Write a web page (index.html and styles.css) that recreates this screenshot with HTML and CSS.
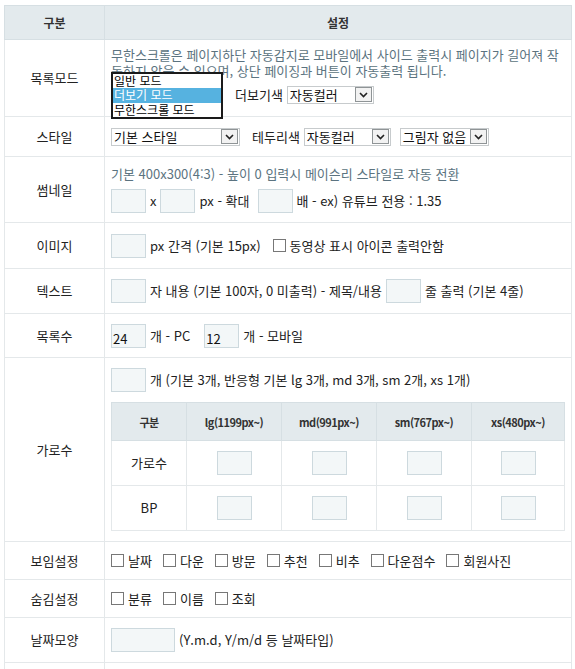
FILE: index.html
```html
<!DOCTYPE html>
<html lang="ko">
<head>
  <meta charset="UTF-8" />
  <title>목록 설정</title>
  <link rel="stylesheet" href="styles.css">
</head>
<body>
  <table class="frm">
    <colgroup>
      <col class="col-th">
      <col>
    </colgroup>
    <thead>
      <tr>
        <th>구분</th>
        <th>설정</th>
      </tr>
    </thead>
    <tbody>
      <tr class="r-mode">
        <td class="lbl">목록모드</td>
        <td>
          <div class="mode-wrap">
            <p class="desc">무한스크롤은 페이지하단 자동감지로 모바일에서 사이드 출력시 페이지가 길어져 작동하지 않을 수 있으며, 상단 페이징과 버튼이 자동출력 됩니다.</p>
            <div class="line">
              <span class="sel w-mode"><span class="sel-txt">더보기 모드</span><span class="sel-btn"><svg width="9" height="6" viewBox="0 0 9 6"><path d="M1 1l3.5 3.5L8 1" fill="none" stroke="#222" stroke-width="1.6"/></svg></span></span>
              <span class="gap">더보기색</span>
              <span class="sel w-color"><span class="sel-txt">자동컬러</span><span class="sel-btn"><svg width="9" height="6" viewBox="0 0 9 6"><path d="M1 1l3.5 3.5L8 1" fill="none" stroke="#222" stroke-width="1.6"/></svg></span></span>
            </div>
            <ul class="dropdown">
              <li>일반 모드</li>
              <li class="on">더보기 모드</li>
              <li>무한스크롤 모드</li>
            </ul>
          </div>
        </td>
      </tr>
      <tr class="r-style">
        <td class="lbl">스타일</td>
        <td>
          <div class="line">
            <span class="sel w-style"><span class="sel-txt">기본 스타일</span><span class="sel-btn"><svg width="9" height="6" viewBox="0 0 9 6"><path d="M1 1l3.5 3.5L8 1" fill="none" stroke="#222" stroke-width="1.6"/></svg></span></span>
            <span class="gap">테두리색</span>
            <span class="sel w-color"><span class="sel-txt">자동컬러</span><span class="sel-btn"><svg width="9" height="6" viewBox="0 0 9 6"><path d="M1 1l3.5 3.5L8 1" fill="none" stroke="#222" stroke-width="1.6"/></svg></span></span>
            <span class="sel w-shadow"><span class="sel-txt">그림자 없음</span><span class="sel-btn"><svg width="9" height="6" viewBox="0 0 9 6"><path d="M1 1l3.5 3.5L8 1" fill="none" stroke="#222" stroke-width="1.6"/></svg></span></span>
          </div>
        </td>
      </tr>
      <tr class="r-thumb">
        <td class="lbl">썸네일</td>
        <td>
          <p class="desc">기본 400x300(4:3) - 높이 0 입력시 메이슨리 스타일로 자동 전환</p>
          <div class="line">
            <input type="text" class="inp"> <span>x</span>
            <input type="text" class="inp"> <span>px - 확대</span>
            <input type="text" class="inp ml"> <span>배 - ex) 유튜브 전용 : 1.35</span>
          </div>
        </td>
      </tr>
      <tr class="r-img">
        <td class="lbl">이미지</td>
        <td>
          <div class="line">
            <input type="text" class="inp"> <span>px 간격 (기본 15px)</span>
            <label class="chk ml"><input type="checkbox"> 동영상 표시 아이콘 출력안함</label>
          </div>
        </td>
      </tr>
      <tr class="r-text">
        <td class="lbl">텍스트</td>
        <td>
          <div class="line">
            <input type="text" class="inp"> <span>자 내용 (기본 100자, 0 미출력) - 제목/내용</span>
            <input type="text" class="inp"> <span>줄 출력 (기본 4줄)</span>
          </div>
        </td>
      </tr>
      <tr class="r-rows">
        <td class="lbl">목록수</td>
        <td>
          <div class="line">
            <input type="text" class="inp" value="24"> <span>개 - PC</span>
            <input type="text" class="inp ml2" value="12"> <span>개 - 모바일</span>
          </div>
        </td>
      </tr>
      <tr class="r-cols">
        <td class="lbl">가로수</td>
        <td>
          <div class="line">
            <input type="text" class="inp"> <span>개 (기본 3개, 반응형 기본 lg 3개, md 3개, sm 2개, xs 1개)</span>
          </div>
          <table class="sub">
            <thead>
              <tr>
                <th class="c-gb">구분</th>
                <th>lg(1199px~)</th>
                <th>md(991px~)</th>
                <th>sm(767px~)</th>
                <th class="c-xs">xs(480px~)</th>
              </tr>
            </thead>
            <tbody>
              <tr>
                <td>가로수</td>
                <td><input type="text" class="inp"></td>
                <td><input type="text" class="inp"></td>
                <td><input type="text" class="inp"></td>
                <td><input type="text" class="inp"></td>
              </tr>
              <tr>
                <td>BP</td>
                <td><input type="text" class="inp"></td>
                <td><input type="text" class="inp"></td>
                <td><input type="text" class="inp"></td>
                <td><input type="text" class="inp"></td>
              </tr>
            </tbody>
          </table>
        </td>
      </tr>
      <tr class="r-show">
        <td class="lbl">보임설정</td>
        <td>
          <div class="chks">
            <label class="chk"><input type="checkbox"> 날짜</label>
            <label class="chk"><input type="checkbox"> 다운</label>
            <label class="chk"><input type="checkbox"> 방문</label>
            <label class="chk"><input type="checkbox"> 추천</label>
            <label class="chk"><input type="checkbox"> 비추</label>
            <label class="chk"><input type="checkbox"> 다운점수</label>
            <label class="chk"><input type="checkbox"> 회원사진</label>
          </div>
        </td>
      </tr>
      <tr class="r-hide">
        <td class="lbl">숨김설정</td>
        <td>
          <div class="chks">
            <label class="chk"><input type="checkbox"> 분류</label>
            <label class="chk"><input type="checkbox"> 이름</label>
            <label class="chk"><input type="checkbox"> 조회</label>
          </div>
        </td>
      </tr>
      <tr class="r-date">
        <td class="lbl">날짜모양</td>
        <td>
          <div class="line">
            <input type="text" class="inp w-date"> <span>(Y.m.d, Y/m/d 등 날짜타입)</span>
          </div>
        </td>
      </tr>
      <tr class="r-more">
        <td class="lbl">&nbsp;</td>
        <td>&nbsp;</td>
      </tr>
    </tbody>
  </table>
</body>
</html>
```

FILE: styles.css
```css
* {
  box-sizing: border-box;
  margin: 0;
  padding: 0;
}

body {
  margin: 5px 3px 0 4px;
  background: #fff;
  color: #222;
  font-family: "Noto Sans CJK KR", "Noto Sans", sans-serif;
  font-size: 13px;
  line-height: 16px;
}

.frm {
  width: 568px;
  border-collapse: collapse;
  table-layout: fixed;
}

.frm .col-th {
  width: 100px;
}

.frm > thead th {
  height: 34px;
  background: #e3eaed;
  border: 1px solid #d6dfe3;
  font-weight: bold;
  font-size: 12px;
  color: #333;
  text-align: center;
}

.frm > tbody > tr > td {
  border: 1px solid #e4e8ea;
  padding: 0 6px;
  vertical-align: middle;
}

.frm > tbody > tr > td.lbl {
  text-align: center;
  padding: 0;
}

.r-mode > td { height: 77px; }
.r-style > td { height: 40px; }
.r-thumb > td { height: 66px; }
.r-img > td { height: 46px; }
.r-text > td { height: 45px; }
.r-rows > td { height: 44px; }
.r-cols > td { height: 184px; }
.r-show > td { height: 38px; }
.r-hide > td { height: 38px; }
.r-date > td { height: 45px; }
.r-more > td { height: 30px; }

.desc {
  color: #5b7380;
}

.line {
  display: flex;
  align-items: center;
  gap: 4px;
}

.line .gap {
  margin-left: 9px;
}

.line .ml {
  margin-left: 4px;
}

.line .ml2 {
  margin-left: 10px;
}

.mode-wrap {
  position: relative;
  padding-bottom: 6px;
}

.mode-wrap .desc {
  margin-bottom: 7px;
}

.dropdown {
  position: absolute;
  left: 0;
  top: 25px;
  width: 112px;
  list-style: none;
  background: #fff;
  border: 2px solid #1a1a1a;
  color: #000;
  font-size: 12px;
}

.dropdown li {
  height: 14.5px;
  line-height: 14px;
  padding-left: 1px;
}

.dropdown li.on {
  background: #56b2e0;
  color: #fff;
}

/* 셀렉트 모양 */
.sel {
  display: inline-flex;
  align-items: center;
  justify-content: space-between;
  height: 18px;
  border: 1px solid #c7cbcd;
  background: #fff;
  padding: 0 1px 0 2px;
  color: #111;
}

.sel-txt {
  white-space: nowrap;
}

.sel-btn {
  display: flex;
  align-items: center;
  justify-content: center;
  width: 17px;
  height: 15px;
  border: 1px solid #8f9496;
  background: #f2f2f2;
}

.w-mode { width: 112px; }
.w-color { width: 87px; }
.w-style { width: 129px; }
.w-shadow { width: 89px; margin-left: 5px; }

.r-mode .gap { margin-left: 8px; }
.r-style .gap { margin-left: 8px; }

/* 입력칸 */
.inp {
  width: 35px;
  height: 24px;
  border: 1px solid #cdd9de;
  background: #f3f7f8;
  font: inherit;
  color: #111;
  padding: 6px 1px 0;
  line-height: 16px;
}

.inp.w-date {
  width: 64px;
}

.r-thumb .desc {
  margin-bottom: 7px;
}

.chk {
  display: inline-flex;
  align-items: center;
  gap: 4px;
  white-space: nowrap;
}

.line .chk.ml {
  margin-left: 8px;
}

.chk input {
  appearance: none;
  width: 13px;
  height: 13px;
  border: 1px solid #777;
  background: #fff;
}

.chks {
  display: flex;
  gap: 11px;
}

/* 반응형 가로수 표 */
.sub {
  width: 100%;
  margin-top: 10px;
  border-collapse: collapse;
  table-layout: fixed;
}

.sub th,
.sub td {
  border: 1px solid #e4e8ea;
  text-align: center;
}

.sub th {
  height: 38px;
  background: #e3eaed;
  border-color: #d6dfe3;
  font-weight: bold;
  font-size: 11px;
  letter-spacing: -0.5px;
  color: #333;
}

.sub th.c-gb { width: 75px; }
.sub th.c-xs { width: 93px; }

.sub td {
  height: 45px;
}

.sub .inp {
  vertical-align: middle;
}
```
